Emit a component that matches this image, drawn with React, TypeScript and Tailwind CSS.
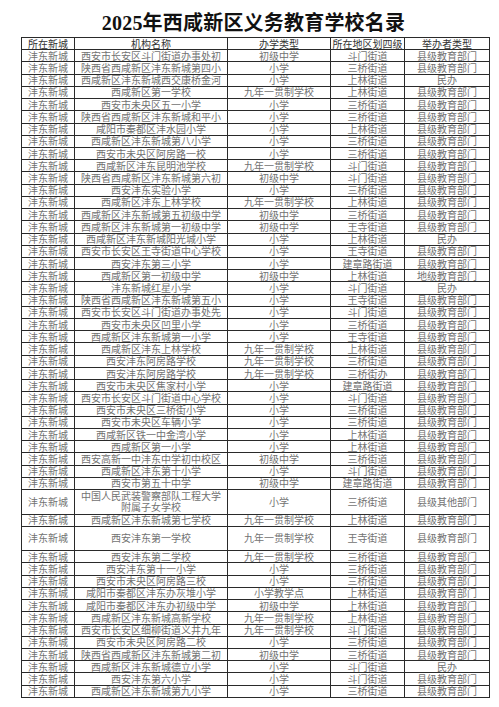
import React from "react";

type Row = [string, string, string, string, string?];

const rows: Row[] = [
  ["西安市长安区斗门街道办事处初", "初级中学", "斗门街道", "县级教育部门"],
  ["陕西省西咸新区沣东新城第四小", "小学", "三桥街道", "县级教育部门"],
  ["西咸新区沣东新城西交康桥金河", "小学", "上林街道", "民办"],
  ["西咸新区第一学校", "九年一贯制学校", "上林街道", "县级教育部门"],
  ["西安市未央区五一小学", "小学", "三桥街道", "县级教育部门"],
  ["陕西省西咸新区沣东新城和平小", "小学", "三桥街道", "县级教育部门"],
  ["咸阳市秦都区沣水园小学", "小学", "上林街道", "县级教育部门"],
  ["西咸新区沣东新城第八小学", "小学", "三桥街道", "县级教育部门"],
  ["西安市未央区阿房路一校", "小学", "三桥街道", "县级教育部门"],
  ["西咸新区沣东昆明池学校", "九年一贯制学校", "斗门街道", "县级教育部门"],
  ["陕西省西咸新区沣东新城第六初", "初级中学", "斗门街道", "县级教育部门"],
  ["西安沣东实验小学", "小学", "三桥街道", "县级教育部门"],
  ["西咸新区沣东上林学校", "九年一贯制学校", "上林街道", "县级教育部门"],
  ["西咸新区沣东新城第五初级中学", "初级中学", "三桥街道", "县级教育部门"],
  ["西咸新区沣东新城第一初级中学", "初级中学", "王寺街道", "县级教育部门"],
  ["西咸新区沣东新城阳光城小学", "小学", "上林街道", "民办"],
  ["西安市长安区王寺街道中心学校", "小学", "王寺街道", "县级教育部门"],
  ["西安沣东第三小学", "小学", "建章路街道", "县级教育部门"],
  ["西咸新区第一初级中学", "初级中学", "上林街道", "地级教育部门"],
  ["沣东新城红星小学", "小学", "斗门街道", "民办"],
  ["陕西省西咸新区沣东新城第五小", "小学", "王寺街道", "县级教育部门"],
  ["西安市长安区斗门街道办事处先", "小学", "斗门街道", "县级教育部门"],
  ["西安市未央区凹里小学", "小学", "三桥街道", "县级教育部门"],
  ["西咸新区沣东新城第一小学", "小学", "王寺街道", "县级教育部门"],
  ["西咸新区沣东上林学校", "九年一贯制学校", "上林街道", "县级教育部门"],
  ["西安沣东阿房路学校", "九年一贯制学校", "三桥街道", "县级教育部门"],
  ["西安沣东阿房路学校", "九年一贯制学校", "三桥街办", "县级教育部门"],
  ["西安市未央区焦家村小学", "小学", "建章路街道", "县级教育部门"],
  ["西安市长安区斗门街道中心学校", "小学", "斗门街道", "县级教育部门"],
  ["西安市未央区三桥街小学", "小学", "三桥街道", "县级教育部门"],
  ["西安市未央区车辆小学", "小学", "三桥街道", "县级教育部门"],
  ["西咸新区铁一中金湾小学", "小学", "上林街道", "县级教育部门"],
  ["西咸新区第一小学", "小学", "上林街道", "县级教育部门"],
  ["西安高新一中沣东中学初中校区", "初级中学", "三桥街道", "县级教育部门"],
  ["西咸新区沣东第十小学", "小学", "斗门街道", "县级教育部门"],
  ["西安市第五十中学", "初级中学", "建章路街道", "县级教育部门"],
  ["中国人民武装警察部队工程大学|附属子女学校", "小学", "三桥街道", "县级其他部门", "tall"],
  ["西咸新区沣东新城第七学校", "九年一贯制学校", "上林街道", "县级教育部门"],
  ["西安沣东第一学校", "九年一贯制学校", "王寺街道", "县级教育部门", "tall"],
  ["西安沣东第二学校", "九年一贯制学校", "三桥街道", "县级教育部门"],
  ["西安沣东第十一小学", "小学", "三桥街道", "县级教育部门"],
  ["西安市未央区阿房路三校", "小学", "三桥街道", "县级教育部门"],
  ["咸阳市秦都区沣东办灰堆小学", "小学教学点", "上林街道", "县级教育部门"],
  ["咸阳市秦都区沣东办初级中学", "初级中学", "上林街道", "县级教育部门"],
  ["西咸新区沣东新城高新学校", "九年一贯制学校", "上林街道", "县级教育部门"],
  ["西安市长安区细柳街道义井九年", "九年一贯制学校", "斗门街道", "县级教育部门"],
  ["西安市未央区阿房路二校", "小学", "三桥街道", "县级教育部门"],
  ["陕西省西咸新区沣东新城第二初", "初级中学", "三桥街道", "县级教育部门"],
  ["西咸新区沣东新城德立小学", "小学", "斗门街道", "民办"],
  ["西安沣东第六小学", "小学", "斗门街道", "县级教育部门"],
  ["西咸新区沣东新城第九小学", "小学", "三桥街道", "县级教育部门"],
];

const cell =
  "flex items-center justify-center border-r border-b border-[#2a2a2a] whitespace-nowrap";

export default function App() {
  return (
    <div
      className="w-[499px] h-[707px] bg-white overflow-hidden"
      style={{ fontFamily: '"Noto Sans CJK SC", "Noto Sans", sans-serif' }}
    >
      <div className="pt-[13px] pl-[8px] h-[37px] flex justify-center">
        <h1
          className="text-[20px] leading-[21px] font-bold text-[#111] tracking-[0.2px]"
          style={{ fontFamily: '"Liberation Serif", "Noto Sans CJK SC", serif' }}
        >
          2025年西咸新区义务教育学校名录
        </h1>
      </div>
      <div className="ml-[21px] w-[469px] border-l border-t border-[#2a2a2a] text-[10px] leading-[10px] text-[#727272]">
        <div className="grid grid-cols-[53px_153px_103px_74px_85px] h-[12.22px] text-[#333]">
          <div className={cell}>所在新城</div>
          <div className={cell}>机构名称</div>
          <div className={cell}>办学类型</div>
          <div className={cell}>所在地区划四级</div>
          <div className={cell}>举办者类型</div>
        </div>
        {rows.map((r, i) => {
          const tall = r[4] === "tall";
          const names = r[0].split("|");
          return (
            <div
              key={i}
              className={`grid grid-cols-[53px_153px_103px_74px_85px] ${tall ? "h-[24.44px]" : "h-[12.22px]"}`}
            >
              <div className={cell}>沣东新城</div>
              <div className={`${cell} flex-col gap-[1px]`}>
                {names.map((n, j) => (
                  <span key={j}>{n}</span>
                ))}
              </div>
              <div className={cell}>{r[1]}</div>
              <div className={cell}>{r[2]}</div>
              <div className={cell}>{r[3]}</div>
            </div>
          );
        })}
      </div>
    </div>
  );
}
